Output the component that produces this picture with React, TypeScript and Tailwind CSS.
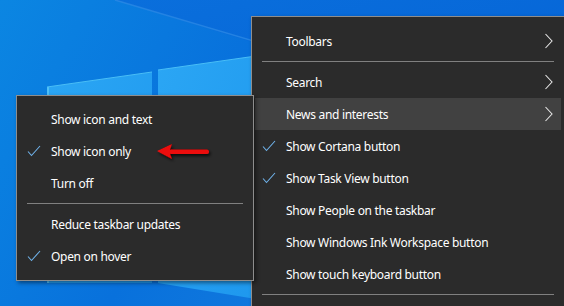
import { type ReactNode } from 'react';

type Item =
  | { kind: 'sep' }
  | { kind: 'item'; label: string; checked?: boolean; sub?: boolean; active?: boolean };

const mainItems: Item[] = [
  { kind: 'item', label: 'Toolbars', sub: true },
  { kind: 'sep' },
  { kind: 'item', label: 'Search', sub: true },
  { kind: 'item', label: 'News and interests', sub: true, active: true },
  { kind: 'item', label: 'Show Cortana button', checked: true },
  { kind: 'item', label: 'Show Task View button', checked: true },
  { kind: 'item', label: 'Show People on the taskbar' },
  { kind: 'item', label: 'Show Windows Ink Workspace button' },
  { kind: 'item', label: 'Show touch keyboard button' },
  { kind: 'sep' },
];

const newsItems: Item[] = [
  { kind: 'item', label: 'Show icon and text' },
  { kind: 'item', label: 'Show icon only', checked: true },
  { kind: 'item', label: 'Turn off' },
  { kind: 'sep' },
  { kind: 'item', label: 'Reduce taskbar updates' },
  { kind: 'item', label: 'Open on hover', checked: true },
];

const CheckMark = () => (
  <svg width="14" height="12" viewBox="0 0 14 12" className="absolute left-[7px] top-[10px]">
    <path d="M1 6.5 L4.5 10.5 L13 1" fill="none" stroke="#6fb2ea" strokeWidth="1.1" />
  </svg>
);

const Chevron = () => (
  <svg width="10" height="16" viewBox="0 0 10 16" className="absolute right-[7px] top-[8px]">
    <path d="M1.5 1 L8 8 L1.5 15" fill="none" stroke="#e6e6e6" strokeWidth="1.1" />
  </svg>
);

const MenuRow = ({ item }: { item: Item }) => {
  if (item.kind === 'sep') {
    return (
      <li className="py-1">
        <div className="mx-[7px] h-px bg-[#808080]" />
      </li>
    );
  }
  return (
    <li
      className={`relative flex h-8 items-center pl-[31px] text-[12px] tracking-[-0.3px] text-white ${
        item.active ? 'bg-[#414141]' : ''
      }`}
    >
      {item.checked && <CheckMark />}
      <span className="pt-px">{item.label}</span>
      {item.sub && <Chevron />}
    </li>
  );
};

const Menu = ({ items, className }: { items: Item[]; className: string }): ReactNode => (
  <ul
    className={`absolute border border-[#8e8e8e] bg-[#2b2b2b] px-[3px] pb-[8px] shadow-[2px_2px_4px_rgba(0,0,0,0.45)] ${className}`}
  >
    {items.map((item, i) => (
      <MenuRow key={i} item={item} />
    ))}
  </ul>
);

const Wallpaper = () => (
  <svg width="564" height="306" viewBox="0 0 564 306" className="absolute inset-0">
    <defs>
      <linearGradient id="bg" x1="0" y1="0" x2="1" y2="0.3">
        <stop offset="0" stopColor="#0b86e2" />
        <stop offset="0.45" stopColor="#0871dc" />
        <stop offset="1" stopColor="#1a7fdf" />
      </linearGradient>
      <linearGradient id="top" x1="0" y1="0" x2="1" y2="1">
        <stop offset="0" stopColor="#0a6fdc" />
        <stop offset="1" stopColor="#0462d6" />
      </linearGradient>
      <linearGradient id="pane" x1="0" y1="0" x2="1" y2="1">
        <stop offset="0" stopColor="#2ba6f4" />
        <stop offset="1" stopColor="#1e98ee" />
      </linearGradient>
    </defs>
    <rect width="564" height="306" fill="url(#bg)" />
    <polygon points="115,0 564,0 564,120 252,42" fill="url(#top)" />
    <line x1="115" y1="0" x2="260" y2="43" stroke="#2f8ce6" strokeWidth="1.5" opacity="0.7" />
    <polygon points="47,87 152,72 152,283 47,283" fill="url(#pane)" />
    <polygon points="158,70 256,56 256,299 158,283" fill="url(#pane)" />
    <line x1="48" y1="87" x2="48" y2="283" stroke="#5ccaf8" strokeWidth="1.5" />
    <line x1="47" y1="87" x2="152" y2="72" stroke="#48bdf6" strokeWidth="1" />
    <line x1="158" y1="70" x2="256" y2="56" stroke="#48bdf6" strokeWidth="1" />
  </svg>
);

const RedArrow = () => (
  <svg width="66" height="26" viewBox="150 139 66 26" className="absolute left-[150px] top-[139px]">
    <defs>
      <filter id="sh" x="-20%" y="-40%" width="150%" height="200%">
        <feDropShadow dx="1.5" dy="2" stdDeviation="1.5" floodColor="#000" floodOpacity="0.75" />
      </filter>
    </defs>
    <g filter="url(#sh)" fill="#ec0a0a">
      <polygon points="157,151 172,144 170,149.5 170,154 172,159" />
      <rect x="169" y="149.4" width="40" height="4.6" rx="2.2" />
    </g>
  </svg>
);

export default function App() {
  return (
    <div
      className="relative h-[306px] w-[564px] overflow-hidden"
      style={{ fontFamily: '"Noto Sans", "Liberation Sans", sans-serif' }}
    >
      <Wallpaper />
      <Menu items={mainItems} className="left-[251px] top-[16px] w-[314px] pt-[8px]" />
      <Menu items={newsItems} className="left-[16px] top-[95px] w-[238px] pt-[7px]" />
      <RedArrow />
    </div>
  );
}
